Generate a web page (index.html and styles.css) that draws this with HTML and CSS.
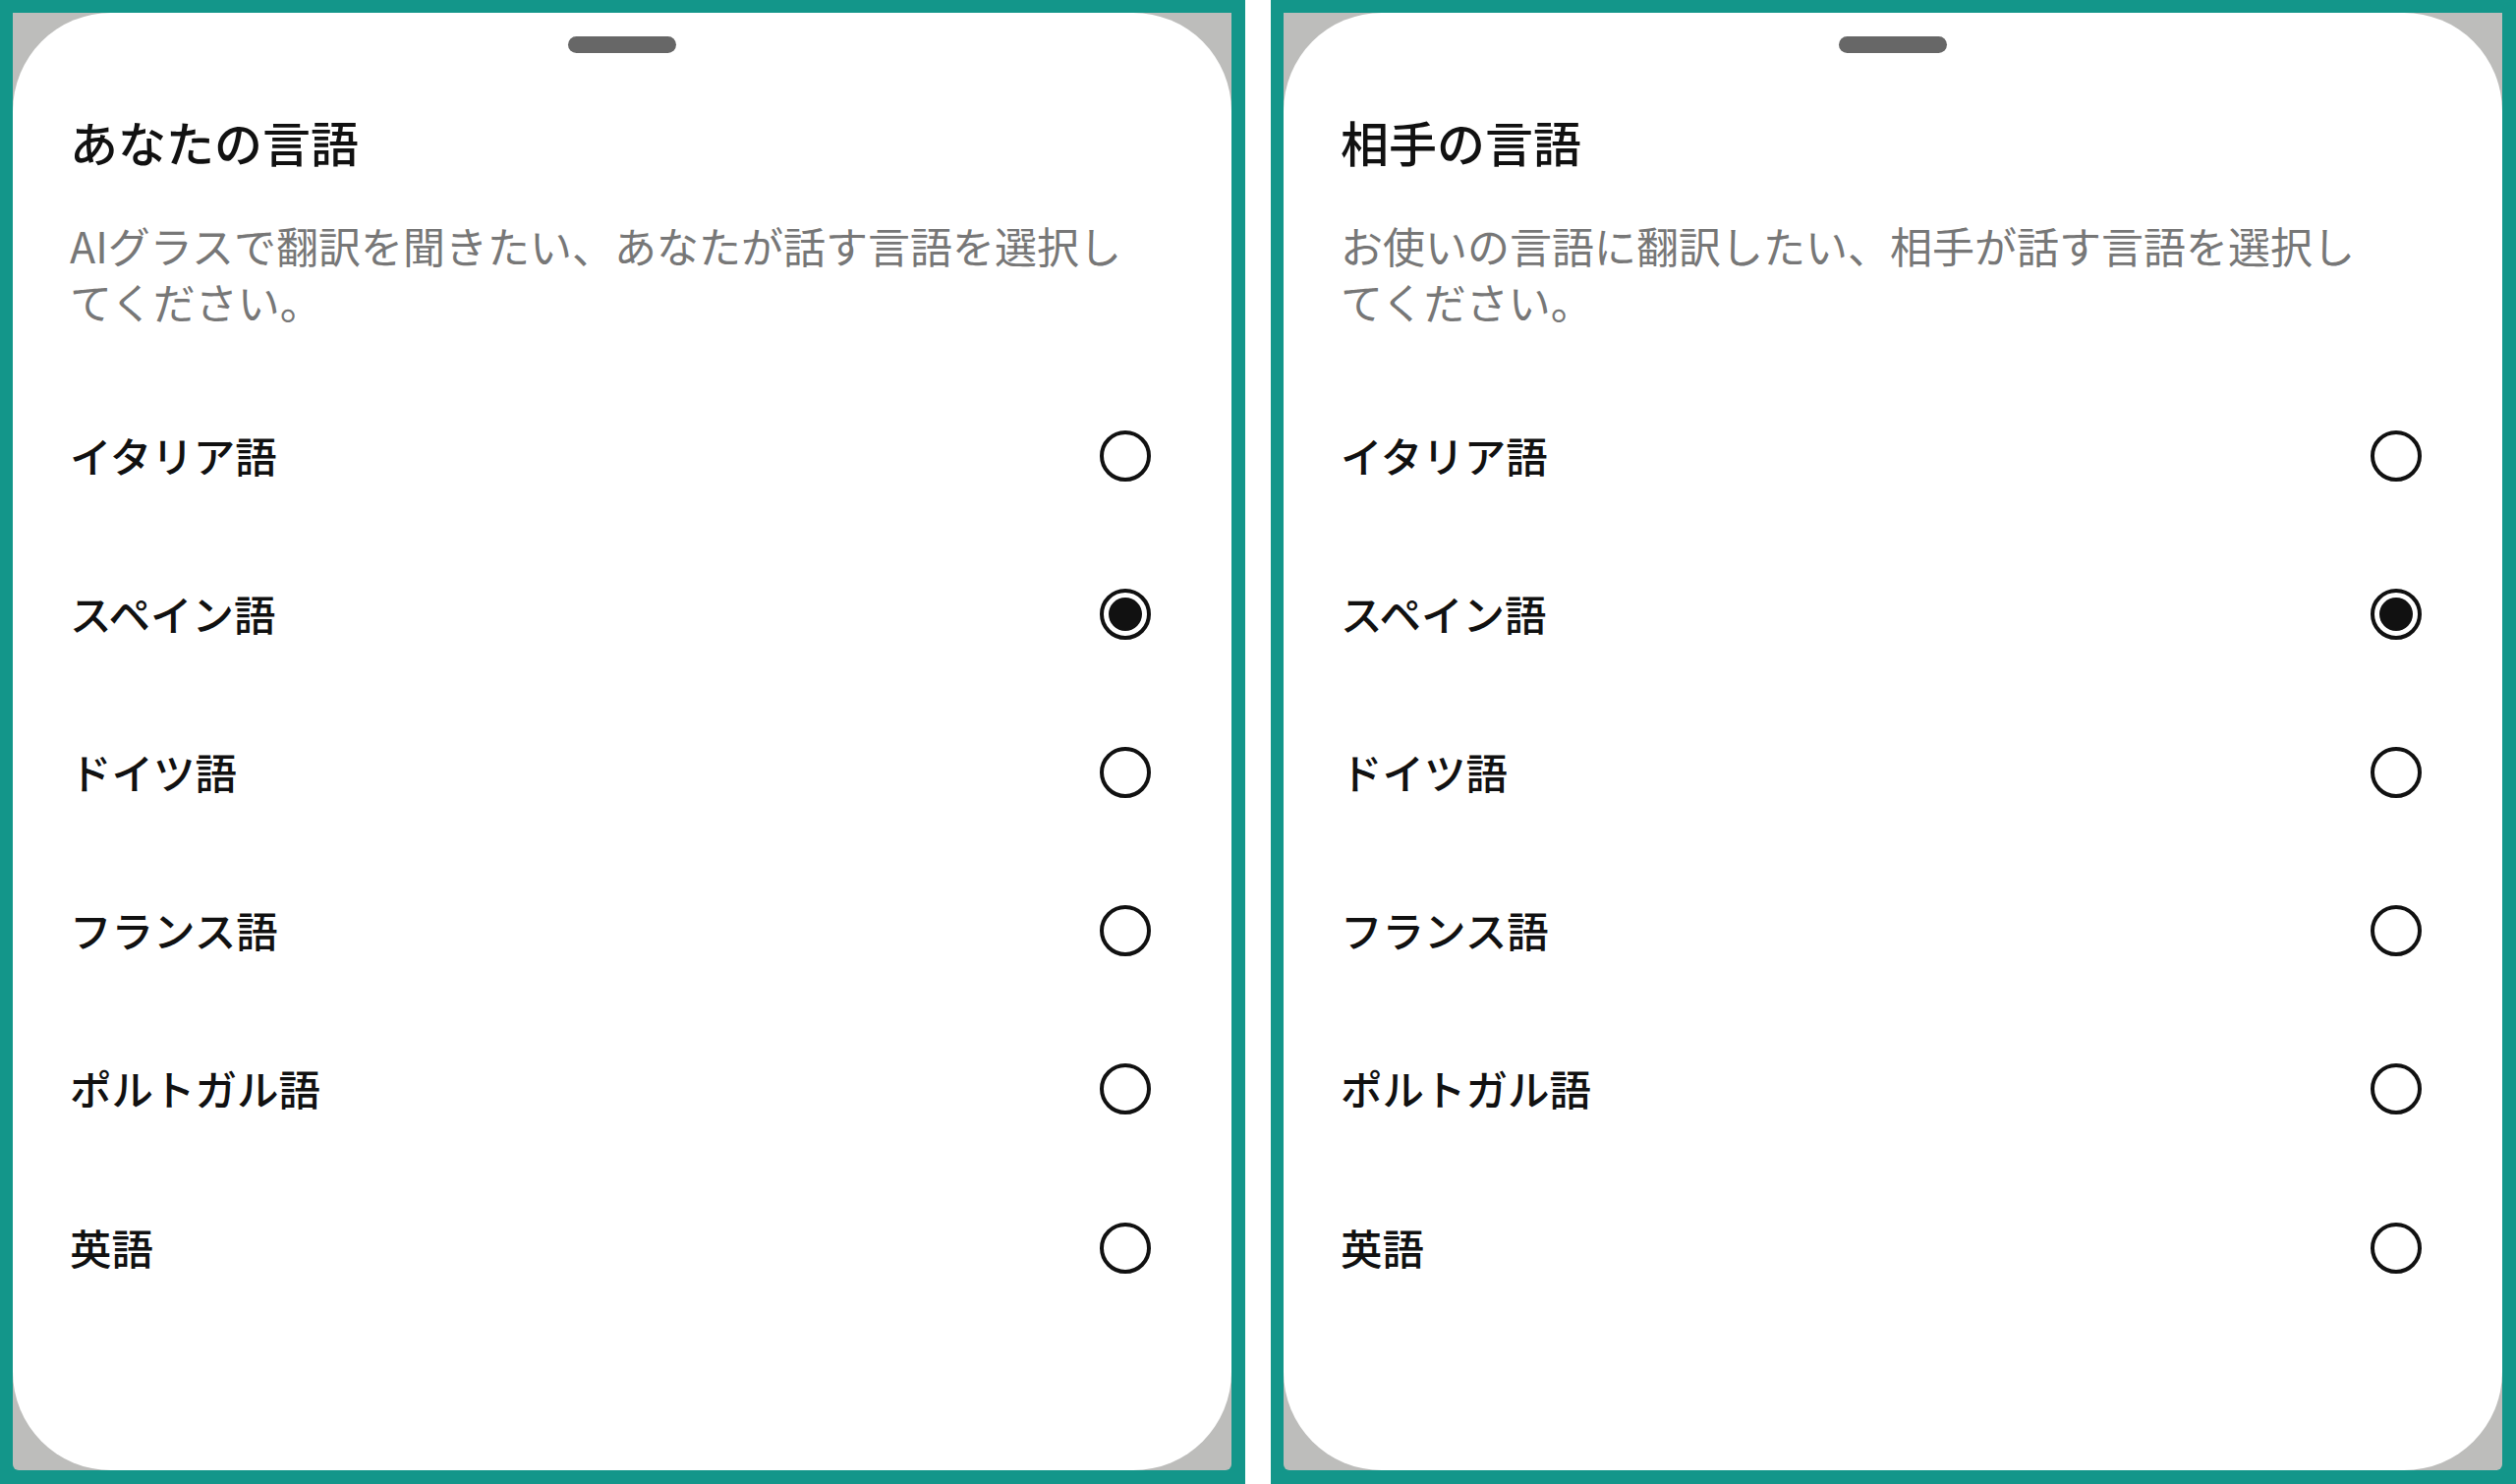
FILE: index.html
```html
<!DOCTYPE html>
<html lang="ja">
<head>
<meta charset="utf-8">
<title>言語の選択</title>
<link rel="stylesheet" href="styles.css">
</head>
<body>
<main class="screens">
  <section class="panel">
    <div class="frame">
      <div class="sheet">
        <div class="grabber"></div>
        <h2 class="sheet-title">あなたの言語</h2>
        <p class="sheet-desc">AIグラスで翻訳を聞きたい、あなたが話す言語を選択してください。</p>
        <ul class="lang-list">
          <li class="lang-item"><span class="lang-name">イタリア語</span><span class="radio"></span></li>
          <li class="lang-item"><span class="lang-name">スペイン語</span><span class="radio is-checked"></span></li>
          <li class="lang-item"><span class="lang-name">ドイツ語</span><span class="radio"></span></li>
          <li class="lang-item"><span class="lang-name">フランス語</span><span class="radio"></span></li>
          <li class="lang-item"><span class="lang-name">ポルトガル語</span><span class="radio"></span></li>
          <li class="lang-item"><span class="lang-name">英語</span><span class="radio"></span></li>
        </ul>
      </div>
    </div>
  </section>
  <section class="panel">
    <div class="frame">
      <div class="sheet">
        <div class="grabber"></div>
        <h2 class="sheet-title">相手の言語</h2>
        <p class="sheet-desc">お使いの言語に翻訳したい、相手が話す言語を選択してください。</p>
        <ul class="lang-list">
          <li class="lang-item"><span class="lang-name">イタリア語</span><span class="radio"></span></li>
          <li class="lang-item"><span class="lang-name">スペイン語</span><span class="radio is-checked"></span></li>
          <li class="lang-item"><span class="lang-name">ドイツ語</span><span class="radio"></span></li>
          <li class="lang-item"><span class="lang-name">フランス語</span><span class="radio"></span></li>
          <li class="lang-item"><span class="lang-name">ポルトガル語</span><span class="radio"></span></li>
          <li class="lang-item"><span class="lang-name">英語</span><span class="radio"></span></li>
        </ul>
      </div>
    </div>
  </section>
</main>
</body>
</html>
```
FILE: styles.css
```css
* {
  box-sizing: border-box;
}

html, body {
  margin: 0;
  padding: 0;
  background: #ffffff;
}

body {
  font-family: "Noto Sans CJK JP", "Noto Sans", sans-serif;
  color: #111111;
}

.screens {
  display: flex;
  gap: 26px;
  width: 2560px;
  height: 1510px;
}

/* teal outline around each phone screen */
.panel {
  flex: 0 0 1267px;
  height: 1510px;
  background: #13968a;
  padding: 13px 14px 14px 13px;
  display: flex;
}

/* grey backdrop visible behind the sheet corners */
.frame {
  flex: 1;
  background: #bdbdbb;
  border-radius: 0 0 6px 6px;
  display: flex;
}

.sheet {
  flex: 1;
  background: #ffffff;
  border-radius: 100px;
  padding: 24px 84px 0 58px;
  display: flex;
  flex-direction: column;
}

.grabber {
  align-self: center;
  width: 110px;
  height: 17px;
  border-radius: 9px;
  background: #676767;
  margin-left: 26px;
}

.sheet-title {
  margin: 58px 0 0;
  font-size: 49px;
  line-height: 64px;
  font-weight: 500;
  color: #111111;
}

.sheet-desc {
  margin: 45px 0 0;
  max-width: 1070px;
  font-size: 43px;
  line-height: 57px;
  font-weight: 400;
  color: #777777;
}

.lang-list {
  list-style: none;
  margin: 47px 0 0;
  padding: 0;
}

.lang-item {
  height: 161.2px;
  display: flex;
  align-items: center;
  justify-content: space-between;
}

.lang-name {
  font-size: 42.5px;
  line-height: 56px;
  font-weight: 500;
  color: #111111;
}

.radio {
  width: 52px;
  height: 52px;
  border: 4.5px solid #111111;
  border-radius: 50%;
  display: grid;
  place-items: center;
  margin: 2px -2px 0 0;
}

.radio.is-checked::after {
  content: "";
  width: 34px;
  height: 34px;
  border-radius: 50%;
  background: #111111;
}
```
